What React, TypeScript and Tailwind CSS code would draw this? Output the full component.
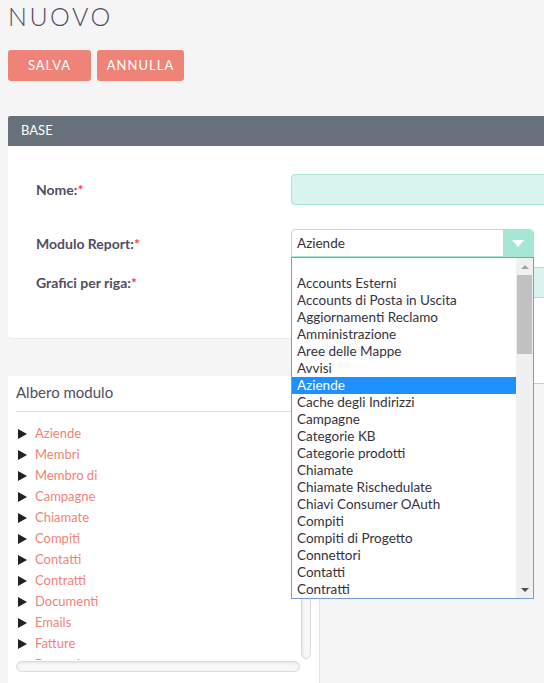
import React from 'react';

const optionList = [
  '',
  'Accounts Esterni',
  'Accounts di Posta in Uscita',
  'Aggiornamenti Reclamo',
  'Amministrazione',
  'Aree delle Mappe',
  'Avvisi',
  'Aziende',
  'Cache degli Indirizzi',
  'Campagne',
  'Categorie KB',
  'Categorie prodotti',
  'Chiamate',
  'Chiamate Rischedulate',
  'Chiavi Consumer OAuth',
  'Compiti',
  'Compiti di Progetto',
  'Connettori',
  'Contatti',
  'Contratti',
];

const treeItems = [
  'Aziende',
  'Membri',
  'Membro di',
  'Campagne',
  'Chiamate',
  'Compiti',
  'Contatti',
  'Contratti',
  'Documenti',
  'Emails',
  'Fatture',
  'Progetti',
];

function Label({ text }: { text: string }) {
  return (
    <div className="w-[255px] shrink-0 text-[14px] font-bold text-[#534d64]">
      {text}
      <span className="text-[#ff3b4e]">*</span>
    </div>
  );
}

function TreeArrow() {
  return (
    <svg width="9" height="10" viewBox="0 0 9 10" className="shrink-0">
      <polygon points="0,0 9,5 0,10" fill="#222" />
    </svg>
  );
}

function Dropdown() {
  return (
    <div className="absolute left-[291px] top-[257px] flex h-[342px] w-[243px] border border-[#7b9ad3] bg-white">
      <div className="flex-1 overflow-hidden">
        {optionList.map((opt, i) => (
          <div
            key={i}
            className={
              opt === 'Aziende'
                ? 'h-[17px] bg-[#1e90ff] pl-[5px] text-[13.5px] leading-[17px] text-white'
                : 'h-[17px] pl-[5px] text-[13.5px] leading-[17px] text-[#36333f]'
            }
          >
            {opt}
          </div>
        ))}
      </div>
      <div className="flex w-[17px] flex-col bg-[#f0f0f0]">
        <div className="flex h-[17px] items-center justify-center">
          <svg width="8" height="4" viewBox="0 0 8 4">
            <polygon points="0,4 4,0 8,4" fill="#a3a3a3" />
          </svg>
        </div>
        <div className="mx-[1px] h-[79px] bg-[#c1c1c1]" />
        <div className="flex-1" />
        <div className="flex h-[17px] items-center justify-center">
          <svg width="8" height="4" viewBox="0 0 8 4">
            <polygon points="0,0 8,0 4,4" fill="#505050" />
          </svg>
        </div>
      </div>
    </div>
  );
}

export default function App() {
  return (
    <div className="relative h-[683px] w-[544px] overflow-hidden bg-[#f5f5f5] font-['Lato','Noto_Sans',sans-serif]">
      <div className="pl-2">
        <h1 className="text-[25px] font-light leading-[32px] tracking-[2.5px] text-[#534d64]">
          NUOVO
        </h1>

        <div className="mt-[18px] flex gap-[6px]">
          <button className="h-[31px] w-[83px] rounded-[3px] bg-[#f08377] text-[13px] tracking-[1px] text-white">
            SALVA
          </button>
          <button className="h-[31px] w-[87px] rounded-[3px] bg-[#f08377] text-[13px] tracking-[1px] text-white">
            ANNULLA
          </button>
        </div>

        <div className="mt-[35px] w-[536px]">
          <div className="flex h-[30px] items-center rounded-tl-[2px] bg-[#68717b] pl-[13px] text-[13px] text-white">
            BASE
          </div>
          <div className="overflow-hidden rounded-bl-[4px] bg-white pb-[40px] pl-[28px] pt-[28px] shadow-[0_1px_1px_rgba(0,0,0,0.04)]">
            <div className="flex h-[31px] items-center">
              <Label text="Nome:" />
              <div className="h-[31px] w-[270px] shrink-0 rounded-[4px] border border-[#a6e6d4] bg-[#d9f4ee]" />
            </div>
            <div className="mt-[24px] flex h-[28px] items-center">
              <Label text="Modulo Report:" />
              <div className="flex h-[28px] w-[243px] shrink-0 overflow-hidden rounded-t-[4px] border border-[#a6e6d4] bg-white">
                <div className="flex-1 pl-[5px] text-[13.5px] leading-[26px] text-[#333]">Aziende</div>
                <div className="flex w-[30px] items-center justify-center bg-[#a6e6d4]">
                  <svg width="12" height="7" viewBox="0 0 12 7">
                    <polygon points="0,0 12,0 6,7" fill="#fff" />
                  </svg>
                </div>
              </div>
            </div>
            <div className="mt-[10px] flex h-[31px] items-center">
              <Label text="Grafici per riga:" />
              <div className="h-[31px] w-[270px] shrink-0 rounded-[4px] border border-[#a6e6d4] bg-[#d9f4ee]" />
            </div>
          </div>
        </div>

        <div className="flex">
          <div className="mt-[38px] h-[400px] w-[312px] shrink-0 border-r border-[#e2e2e2] bg-white px-2">
            <div className="pt-[6px] text-[15px] leading-[20px] text-[#534d64]">Albero modulo</div>
            <div className="mt-[9px] h-px bg-[#dddddd]" />
            <div className="mt-[11px] flex">
              <div className="h-[237px] w-[286px] overflow-hidden">
                {treeItems.map((item) => (
                  <div key={item} className="flex h-[21px] items-center gap-[8px] pl-[2px]">
                    <TreeArrow />
                    <span className="text-[13px] text-[#f08377]">{item}</span>
                  </div>
                ))}
              </div>
              <div className="h-[236px] w-[10px] rounded-full border border-[#dcdcdc] bg-[#f7f7f7] shadow-[inset_1px_0_2px_rgba(0,0,0,0.08)]" />
            </div>
            <div className="mt-px h-[11px] w-[284px] rounded-full border border-[#dcdcdc] bg-[#f7f7f7] shadow-[inset_0_1px_2px_rgba(0,0,0,0.08)]" />
          </div>
          <div className="ml-[10px] flex-1">
            <div className="h-[46px] border-b border-[#cccccc] bg-white pl-[201px]">
              <div className="h-[30px] w-[20px] border-l-[3px] border-[#c8cdd5] bg-white" />
            </div>
          </div>
        </div>
      </div>

      <Dropdown />
    </div>
  );
}
